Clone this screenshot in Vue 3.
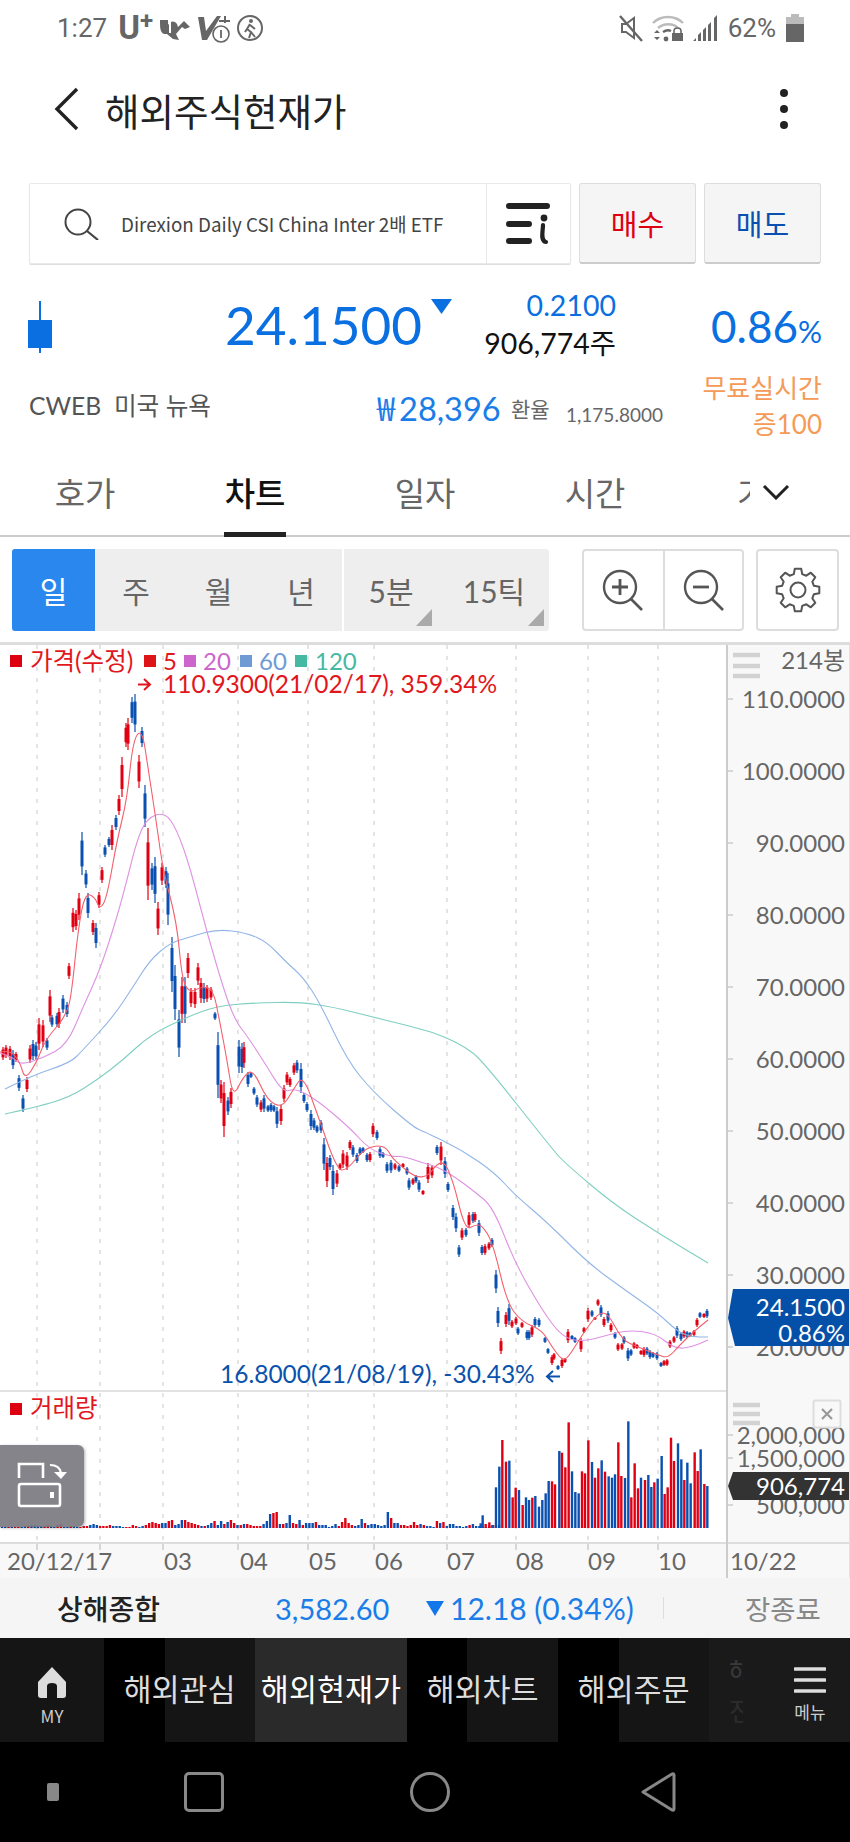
<template>
  <div class="page">
    <div class="status">
      <div class="status-left">
        <span class="time">1:27</span>
        <span class="carrier">U<sup>+</sup></span>
        <svg width="34" height="28" viewBox="0 0 34 28"><path d="M2 6h8v5c3-5 7-4 9-1l1 3 6-6 6 6-5 2-3-2-6 7 3 6-6-1-6-5H6c-4-2-4-6-4-14z" fill="#666"/><path d="M12 5v14" stroke="#fff" stroke-width="2"/></svg>
        <svg width="34" height="30" viewBox="0 0 34 30"><path d="M1 4h6l2 14L20 3h4L10 27H5z" fill="#666"/><path d="M22 8h11M28 3v7" stroke="#666" stroke-width="2"/><circle cx="24" cy="21" r="8" fill="#fff" stroke="#666" stroke-width="1.6"/><path d="M24 17v8" stroke="#666" stroke-width="1.8"/></svg>
        <svg width="28" height="28" viewBox="0 0 28 28"><circle cx="14" cy="14" r="12" fill="none" stroke="#666" stroke-width="2"/><circle cx="15" cy="7" r="2" fill="#666"/><path d="M14 10l-3 5 4 3-2 6M14 11l5 4M11 15l-2 3M15 18l4 5" fill="none" stroke="#666" stroke-width="2"/></svg>
      </div>
      <div class="status-right">
        <svg width="26" height="28" viewBox="0 0 26 28"><path d="M4 10h4l8-6v20l-8-6H4z" fill="none" stroke="#666" stroke-width="2"/><path d="M2 2l22 25" stroke="#666" stroke-width="2.4"/></svg>
        <svg width="32" height="28" viewBox="0 0 32 28"><path d="M1 9c8-8 22-8 30 0M6 14c6-5 15-5 20 0" fill="none" stroke="#bbb" stroke-width="2.4"/><path d="M11 18c3-2 6-2 8-1" fill="none" stroke="#666" stroke-width="2.4"/><circle cx="14" cy="25" r="2.4" fill="#666"/><path d="M2 19l3-3 3 3zM2 23l3 3 3-3z" fill="#666"/><rect x="20" y="19" width="11" height="8" fill="#666"/><path d="M22 19v-2c0-4 7-4 7 0v2" fill="none" stroke="#666" stroke-width="1.6"/></svg>
        <svg width="28" height="28" viewBox="0 0 28 28"><path d="M1 27l3-3v3zM6 27v-6l3-3v9zM11 27V16l3-3v14zM16 27V11l3-3v19zM22 27V4l3-3v26z" fill="#666"/></svg>
        <span class="pct">62%</span>
        <svg class="batt" width="18" height="28" viewBox="0 0 18 28"><path d="M5 0h8v3h5v7H0V3h5z" fill="#bbb"/><rect y="10" width="18" height="18" fill="#666"/></svg>
      </div>
    </div>

    <header class="head">
      <svg class="back" width="26" height="44" viewBox="0 0 26 44"><path d="M23 2L3 22l20 20" fill="none" stroke="#222" stroke-width="3.4"/></svg>
      <h1 class="title">해외주식현재가</h1>
      <div class="kebab"><i></i><i></i><i></i></div>
    </header>

    <div class="search-row">
      <div class="search">
        <svg class="glass" width="38" height="32" viewBox="0 0 38 32"><circle cx="15" cy="14" r="12.5" fill="none" stroke="#444" stroke-width="2"/><path d="M24 23l11 9" stroke="#444" stroke-width="2.2"/></svg>
        <span class="search-text">Direxion Daily CSI China Inter 2배 ETF</span>
        <div class="info-btn">
          <svg width="46" height="42" viewBox="0 0 46 42"><path d="M3 3h38M3 21h20M3 38h20" stroke="#222" stroke-width="6" stroke-linecap="round"/><circle cx="38" cy="15" r="3.4" fill="#222"/><path d="M37 22c0 6-3 16 3 17" fill="none" stroke="#222" stroke-width="4.2" stroke-linecap="round"/></svg>
        </div>
      </div>
      <button class="trade buy">매수</button>
      <button class="trade sell">매도</button>
    </div>

    <section class="quote">
      <svg class="candle" width="24" height="52" viewBox="0 0 24 52"><path d="M12 0v52" stroke="#0a6fe0" stroke-width="2"/><rect y="19" width="24" height="28" fill="#0a6fe0"/></svg>
      <div class="price">24.1500</div>
      <svg class="down" width="21" height="15" viewBox="0 0 21 15"><path d="M0 0h21L10.500 15z" fill="#0a6fe0"/></svg>
      <div class="change">
        <div class="change-val">0.2100</div>
        <div class="vol">906,774주</div>
      </div>
      <div class="rate">0.86<small>%</small></div>
    </section>

    <section class="sub">
      <div class="code">CWEB&nbsp; 미국 뉴욕</div>
      <div class="won"><span class="won-sign">₩</span>28,396</div>
      <div class="fx-label">환율</div>
      <div class="fx">1,175.8000</div>
      <div class="free">무료실시간<br>증100</div>
    </section>

    <nav class="tabs">
      <div class="tab">호가</div>
      <div class="tab on">차트</div>
      <div class="tab">일자</div>
      <div class="tab">시간</div>
      <div class="tab more">
        <span class="cut">기</span>
        <svg width="28" height="16" viewBox="0 0 28 16"><path d="M2 2l12 12L26 2" fill="none" stroke="#222" stroke-width="3"/></svg>
      </div>
    </nav>

    <div class="tools">
      <div class="seg">
        <div class="seg-item active">일</div>
        <div class="seg-item">주</div>
        <div class="seg-item">월</div>
        <div class="seg-item">년</div>
        <div class="seg-item corner min">5분</div>
        <div class="seg-item corner tick">15틱</div>
      </div>
      <div class="zoom-box">
        <div class="zoom-btn">
          <svg width="42" height="42" viewBox="0 0 42 42"><circle cx="18" cy="18" r="16" fill="none" stroke="#555" stroke-width="2.4"/><path d="M10 18h16M18 10v16" stroke="#555" stroke-width="2.8"/><path d="M29 30l11 11" stroke="#555" stroke-width="2.6"/></svg>
        </div>
        <div class="zoom-btn">
          <svg width="42" height="42" viewBox="0 0 42 42"><circle cx="18" cy="18" r="16" fill="none" stroke="#555" stroke-width="2.4"/><path d="M10 18h16" stroke="#555" stroke-width="2.8"/><path d="M29 30l11 11" stroke="#555" stroke-width="2.6"/></svg>
        </div>
      </div>
      <div class="gear-btn">
        <svg width="46" height="46" viewBox="0 0 46 46"><path :d="gearPath" fill="none" stroke="#555" stroke-width="2" stroke-linejoin="round"/><circle cx="23" cy="23" r="7.500" fill="none" stroke="#555" stroke-width="2"/></svg>
      </div>
    </div>

    <div class="chart">
      <svg class="plot" width="850" height="936" viewBox="0 642 850 936">
        <rect x="0" y="642" width="850" height="3" fill="#ddd"/>
        <rect x="727" y="645" width="123" height="933" fill="#f8f8f8"/>
        <rect x="0" y="1543" width="850" height="35" fill="#f8f8f8"/>

        <path v-for="x in gridX" :key="x" :d="`M${x} 645V1543`" stroke="#e4e4e4" stroke-width="2" stroke-dasharray="4 7"/>
        <path v-for="x in gridX" :key="'t' + x" :d="`M${x} 1543v7`" stroke="#ccc" stroke-width="1.5"/>

        <rect x="0" y="1390" width="727" height="2" fill="#e2e2e2"/>
        <rect x="0" y="1542" width="850" height="2" fill="#ddd"/>
        <rect x="726" y="645" width="2" height="933" fill="#ccc"/>
        <rect x="849" y="645" width="1" height="933" fill="#e2e2e2"/>

        <!-- candles -->
        <g v-for="(c, i) in candles" :key="i" :fill="c[3] ? red : blue">
          <rect :x="c[0] - 0.6" :y="c[1]" width="1.2" :height="c[2] - c[1]"/>
          <rect :x="c[0] - 1.500" :y="c[1] + (c[2] - c[1]) * 0.2" width="3" :height="(c[2] - c[1]) * 0.6"/>
        </g>

        <path :d="smooth(ma120)" class="ma" stroke="#7fcfc0"/>
        <path :d="smooth(ma60)" class="ma" stroke="#92b6e6"/>
        <path :d="smooth(ma20)" class="ma" stroke="#de92e2"/>
        <path :d="smooth(ma5)" class="ma" stroke="#f2606c"/>

        <!-- volume -->
        <rect v-for="(v, i) in earlyVol" :key="'e' + i" :x="2 + i * 3.27 - 1.2" :y="1528 - Math.abs(v)" width="2.4" :height="Math.abs(v)" :fill="v < 0 ? red : blue"/>
        <rect v-for="(v, i) in lateVol" :key="'l' + i" :x="480 + v[0] / 3 - 1.2" :y="1410 + v[1] / 3" width="2.4" :height="1528 - 1410 - v[1] / 3" :fill="v[2] ? red : blue"/>

        <!-- legends -->
        <rect x="10" y="655" width="12" height="12" fill="#dd0010"/>
        <text x="30" y="670" class="t25" fill="#e2171d">가격(수정)</text>
        <rect x="144" y="655" width="12" height="12" fill="#dd1418"/>
        <text x="163" y="670" class="t24" fill="#e2171d">5</text>
        <rect x="184" y="655" width="12" height="12" fill="#cc66cc"/>
        <text x="203" y="670" class="t24" fill="#cc66cc">20</text>
        <rect x="240" y="655" width="12" height="12" fill="#6e9bd4"/>
        <text x="259" y="670" class="t24" fill="#6e9bd4">60</text>
        <rect x="295" y="655" width="12" height="12" fill="#45b9a2"/>
        <text x="315" y="670" class="t24" fill="#45b9a2">120</text>

        <path d="M138 684.500h11M144 679l6 5.500-6 5.500" fill="none" stroke="#e2171d" stroke-width="2"/>
        <text x="163" y="693" class="t25" fill="#e2171d">110.9300(21/02/17), 359.34%</text>

        <text x="220" y="1383" class="t25" fill="#0b52ad">16.8000(21/08/19), -30.43%</text>
        <path d="M560 1376.500h-12M553 1371l-6 5.500 6 5.500" fill="none" stroke="#0b52ad" stroke-width="2"/>

        <rect x="10" y="1403" width="12" height="12" fill="#dd0010"/>
        <text x="30" y="1417" class="t25" fill="#e2171d">거래량</text>

        <!-- price axis -->
        <path d="M733 655h27M733 666h27M733 676h27M733 1405h27M733 1414h27M733 1423h27" stroke="#d2d2d2" stroke-width="4.500"/>
        <text x="845" y="669" class="axis t24">214봉</text>
        <g v-for="p in priceAxis" :key="p.label">
          <path :d="`M727 ${p.y}h6`" stroke="#ccc" stroke-width="1.500"/>
          <text x="845" :y="p.y + 9" class="axis t24">{{ p.label }}</text>
        </g>
        <path d="M733 1289H849V1346H735L728 1318z" fill="#0450a8"/>
        <text x="845" y="1316" class="t24 tag">24.1500</text>
        <text x="845" y="1342" class="t24 tag">0.86%</text>

        <!-- volume axis -->
        <g v-for="p in volAxis" :key="p.label">
          <path :d="`M727 ${p.y}h6`" stroke="#ccc" stroke-width="1.500"/>
          <text x="845" :y="p.y + 9" class="axis t24">{{ p.label }}</text>
        </g>
        <path d="M733 1472H849V1500H733L728 1486z" fill="#333"/>
        <text x="845" y="1495" class="t24 tag">906,774</text>
        <rect x="813.500" y="1400.500" width="27" height="27" rx="2" fill="#f8f8f8" stroke="#ddd" stroke-width="2"/>
        <path d="M822 1409l10 10M832 1409l-10 10" stroke="#999" stroke-width="2.200"/>

        <!-- date axis -->
        <text v-for="d in dates" :key="d.t" :x="d.x" y="1570" class="axis t24 date">{{ d.t }}</text>
      </svg>

      <div class="rotate">
        <svg width="50" height="48" viewBox="0 0 50 48"><path d="M2 16V2h24v14" fill="none" stroke="#fff" stroke-width="2.600"/><rect x="2" y="22" width="41" height="22" rx="2" fill="none" stroke="#fff" stroke-width="2.600"/><rect x="33" y="30" width="4" height="6" fill="#fff"/><path d="M33 3c6 0 10 2 11 8" fill="none" stroke="#fff" stroke-width="2.200"/><path d="M37 10h13l-6 7z" fill="#fff"/></svg>
      </div>
    </div>

    <div class="ticker">
      <span class="idx">상해종합</span>
      <span class="idx-val">3,582.60</span>
      <svg class="idx-tri" width="18" height="15" viewBox="0 0 18 15"><path d="M0 0h18L9 15z" fill="#1277e8"/></svg>
      <span class="idx-chg">12.18 (0.34%)</span>
      <i class="idx-sep"></i>
      <span class="idx-state">장종료</span>
    </div>

    <nav class="bottom">
      <div class="icon-item my">
        <svg width="32" height="32" viewBox="0 0 32 32"><path d="M16 1l14 15v13c0 2-1 3-3 3h-6V20c0-2-2-3-5-3s-5 1-5 3v12H5c-2 0-3-1-3-3V16z" fill="#ddd"/></svg>
        <span>MY</span>
      </div>
      <div class="nav-item">해외관심</div>
      <div class="nav-item active">해외현재가</div>
      <div class="nav-item">해외차트</div>
      <div class="nav-item">해외주문</div>
      <div class="ghost"><span>해</span><span>전</span></div>
      <div class="icon-item menu">
        <svg width="32" height="28" viewBox="0 0 32 28"><path d="M1 3h30M1 14h30M1 25h30" stroke="#ddd" stroke-width="3.600" stroke-linecap="round"/></svg>
        <span>메뉴</span>
      </div>
    </nav>

    <div class="android">
      <i class="dot"></i>
      <i class="recent"></i>
      <i class="home"></i>
      <svg width="36" height="42" viewBox="0 0 36 42"><path d="M32 3L3 21l29 18c1 .5 2 0 2-1V4c0-1-1-1.500-2-1z" fill="none" stroke="#888" stroke-width="3" stroke-linejoin="round"/></svg>
    </div>
  </div>
</template>

<script setup>
const red = '#e00012'
const blue = '#0a50b0'

const gridX = [37, 100, 163, 238, 308, 374, 447, 516, 588, 658]

const priceAxis = [110, 100, 90, 80, 70, 60, 50, 40, 30, 20].map((p) => ({
  label: p.toFixed(4),
  y: 1347 - (p - 20) * 7.2,
}))

const volAxis = [
  { label: '2,000,000', y: 1435 },
  { label: '1,500,000', y: 1458 },
  { label: '500,000', y: 1505 },
]

const dates = [
  { t: '20/12/17', x: 7 },
  { t: '03', x: 164 },
  { t: '04', x: 240 },
  { t: '05', x: 309 },
  { t: '06', x: 375 },
  { t: '07', x: 447 },
  { t: '08', x: 516 },
  { t: '09', x: 588 },
  { t: '10', x: 658 },
  { t: '10/22', x: 730 },
]

// eight teeth around the middle of a 46 box
const gearPath = (() => {
  let d = ''
  for (let i = 0; i < 8; i++) {
    const a = (i * Math.PI) / 4
    const pts = [[-0.26, 16.5], [-0.15, 21.5], [0.15, 21.5], [0.26, 16.5]]
    pts.forEach(([da, r], k) => {
      const x = (23 + r * Math.sin(a + da)).toFixed(1)
      const y = (23 - r * Math.cos(a + da)).toFixed(1)
      d += `${i === 0 && k === 0 ? 'M' : 'L'}${x} ${y}`
    })
  }
  return d + 'z'
})()

// [x, top, bottom, isRed]
const candles = [
  [3,1047,1060,1],[6,1045,1058,1],[10,1046,1060,1],[13,1050,1069,0],[16,1052,1062,1],[19,1075,1091,0],[23,1095,1112,0],[27,1077,1092,1],
  [30,1045,1063,1],[33,1040,1060,0],[36,1042,1060,0],[39,1018,1050,1],[43,1020,1047,1],[47,1038,1050,0],[50,990,1022,1],[52,1015,1027,0],
  [57,1013,1027,0],[59,1008,1028,1],[63,995,1013,0],[67,1002,1017,0],[69,963,979,1],[73,908,932,1],[76,910,930,1],[79,893,920,1],
  [82,832,875,0],[86,870,888,0],[88,893,918,0],[93,920,935,1],[96,923,948,0],[99,892,908,1],[102,867,883,1],[105,845,857,0],
  [109,837,847,0],[112,825,850,1],[116,815,830,0],[119,795,815,1],[122,757,797,1],[126,723,747,1],[128,718,750,1],[132,697,723,0],
  [135,694,732,0],[139,755,788,1],[142,727,747,0],[145,785,827,0],[148,828,900,1],[152,863,890,0],[155,857,903,0],[158,902,935,1],
  [162,863,885,1],[166,867,888,0],[168,873,925,0],[172,937,992,0],[175,965,1020,0],[179,1010,1057,0],[182,977,1023,1],[185,977,1023,0],
  [188,953,978,1],[191,988,1007,1],[195,988,1008,1],[198,963,985,1],[201,978,1003,1],[204,983,1003,0],[207,985,1002,1],[211,987,1000,1],
  [215,1012,1020,0],[218,1032,1098,0],[221,1080,1103,1],[224,1082,1137,1],[228,1097,1115,0],[231,1088,1108,1],[239,1040,1073,0],[242,1043,1073,0],
  [244,1042,1068,1],[248,1072,1087,0],[251,1072,1078,0],[254,1087,1095,0],[257,1095,1107,0],[261,1100,1112,1],[264,1095,1112,0],[268,1105,1112,0],
  [271,1103,1112,0],[274,1105,1112,0],[277,1107,1128,0],[281,1105,1125,1],[284,1085,1102,1],[287,1072,1085,1],[290,1077,1087,1],[294,1063,1075,1],
  [297,1060,1073,0],[301,1063,1093,0],[304,1093,1103,0],[307,1102,1112,0],[311,1110,1130,0],[314,1118,1130,0],[317,1125,1133,0],[321,1120,1133,0],
  [324,1138,1170,0],[327,1157,1187,1],[330,1155,1170,0],[333,1165,1195,0],[337,1170,1187,1],[340,1163,1170,1],[343,1150,1168,1],[347,1152,1170,1],
  [350,1140,1150,1],[353,1145,1157,0],[357,1153,1163,0],[360,1147,1155,0],[363,1147,1153,0],[367,1153,1162,0],[370,1152,1162,1],[373,1123,1137,1],
  [377,1130,1140,0],[380,1147,1158,0],[383,1152,1158,0],[387,1162,1173,0],[391,1160,1173,0],[395,1163,1170,1],[399,1165,1172,0],[403,1163,1168,1],
  [407,1167,1175,0],[409,1178,1190,0],[413,1178,1185,1],[416,1175,1183,0],[419,1180,1192,0],[423,1190,1195,1],[428,1163,1183,1],[432,1165,1178,1],
  [437,1145,1155,0],[441,1142,1165,1],[445,1157,1178,0],[448,1182,1192,0],[453,1205,1220,0],[456,1213,1232,0],[459,1245,1257,0],[462,1228,1240,1],
  [466,1228,1237,0],[469,1212,1228,1],[473,1212,1223,0],[475,1212,1222,1],[479,1220,1236,0],[482,1245,1255,0],[485,1244,1255,1],[489,1242,1250,1],
  [492,1238,1247,0],[496,1270,1293,0],[498,1307,1327,0],[501,1338,1354,1],[506,1312,1327,1],[509,1304,1325,0],[512,1320,1328,1],[516,1317,1325,1],
  [518,1327,1335,0],[522,1322,1328,1],[527,1330,1340,0],[529,1330,1340,0],[532,1325,1337,1],[535,1317,1327,0],[539,1318,1327,0],[545,1337,1343,0],
  [548,1348,1354,0],[552,1355,1365,1],[554,1353,1360,1],[558,1365,1370,0],[562,1358,1368,1],[565,1358,1363,1],[568,1329,1343,1],[572,1335,1340,0],
  [575,1337,1343,0],[581,1338,1352,1],[584,1327,1333,1],[588,1308,1322,1],[592,1310,1317,0],[595,1317,1320,1],[598,1299,1306,1],[601,1305,1317,0],
  [604,1317,1327,1],[608,1311,1323,0],[611,1323,1332,1],[615,1332,1339,0],[618,1343,1351,1],[622,1343,1350,1],[624,1336,1344,0],[628,1348,1361,0],
  [631,1349,1356,0],[634,1342,1349,1],[637,1344,1349,1],[641,1350,1355,1],[644,1347,1357,1],[647,1347,1355,0],[650,1350,1359,0],[653,1352,1358,0],
  [657,1352,1360,0],[661,1362,1367,0],[664,1360,1366,1],[667,1359,1366,1],[670,1340,1348,1],[674,1336,1343,1],[677,1326,1338,0],[681,1332,1341,0],
  [684,1330,1338,1],[687,1331,1338,0],[690,1332,1337,0],[694,1330,1336,1],[697,1318,1327,1],[700,1312,1318,0],[704,1313,1318,1],[707,1309,1318,0],
]

const ma5 = [[0,1052],[10,1050],[20,1062],[25,1080],[37,1062],[45,1040],[67,1015],[72,990],[78,930],[85,893],[95,897],[100,910],[107,897],[117,840],[127,800],[133,740],[142,729],[148,767],[157,827],[163,870],[177,923],[182,980],[190,993],[200,987],[213,988],[220,1023],[227,1060],[233,1098],[243,1077],[253,1069],[267,1100],[282,1108],[293,1090],[303,1075],[317,1113],[337,1170],[347,1170],[363,1150],[377,1145],[387,1148],[393,1160],[423,1183],[442,1157],[453,1180],[465,1230],[475,1225],[482,1225],[493,1243],[507,1303],[522,1322],[542,1330],[552,1347],[562,1360],[568,1358],[582,1335],[598,1313],[608,1313],[622,1340],[638,1347],[658,1355],[668,1358],[678,1347],[692,1333],[708,1320]]
const ma20 = [[0,1053],[13,1057],[20,1065],[43,1058],[67,1045],[83,1007],[100,970],[117,917],[127,880],[137,840],[147,818],[165,812],[177,830],[190,867],[207,933],[227,1000],[237,1023],[245,1033],[263,1060],[283,1093],[295,1088],[317,1100],[350,1128],[370,1150],[393,1157],[403,1156],[423,1163],[438,1167],[455,1177],[475,1192],[493,1207],[515,1263],[542,1310],[562,1337],[582,1342],[608,1335],[628,1330],[655,1333],[675,1349],[692,1347],[708,1340]]
const ma60 = [[5,1089],[33,1075],[70,1063],[83,1050],[113,1017],[133,987],[150,960],[170,943],[190,937],[217,929],[247,933],[267,942],[287,963],[303,977],[320,1003],[347,1060],[373,1092],[413,1127],[425,1132],[462,1150],[495,1173],[515,1195],[548,1223],[588,1263],[625,1290],[658,1313],[678,1332],[692,1337],[708,1337]]
const ma120 = [[5,1114],[37,1107],[70,1097],[97,1080],[123,1060],[150,1035],[187,1017],[217,1006],[253,1003],[300,1002],[333,1007],[373,1017],[425,1030],[445,1037],[465,1047],[482,1060],[553,1150],[565,1163],[612,1203],[658,1233],[708,1263]]

// midpoints + quadratic curves so the averages don't look like polylines
const smooth = (pts) => {
  let d = `M${pts[0][0]} ${pts[0][1]}`
  for (let i = 1; i < pts.length - 1; i++) {
    const mx = (pts[i][0] + pts[i + 1][0]) / 2
    const my = (pts[i][1] + pts[i + 1][1]) / 2
    d += `Q${pts[i][0]} ${pts[i][1]} ${mx} ${my}`
  }
  const last = pts[pts.length - 1]
  return d + `L${last[0]} ${last[1]}`
}

// negative = red bar
const earlyVol = [
  1,1,-1,1,-1,-1,1,2,-2,3,3,2,2,-2,-3,2,1,-3,-4,1,1,-2,2,1,-1,-2,-2,3,4,3,
  -2,-2,-2,-3,2,2,2,1,-1,-1,-3,-2,1,2,-3,-5,-6,-5,-4,5,5,-7,-8,3,4,8,-8,-6,-5,-4,
  -3,2,-2,3,5,-7,3,7,-4,6,-8,-5,3,-3,4,-4,-3,-2,-2,-2,4,7,14,-15,-16,4,-4,5,13,-5,
  -4,8,-3,5,5,5,-6,3,3,3,1,2,4,-2,-6,-10,-5,-3,2,3,9,-5,3,4,4,3,2,3,16,
  -10,5,5,-3,-3,-2,-3,-6,-3,4,-3,2,2,1,-7,5,-6,2,4,4,2,2,1,2,-3,4,2,2,1,1,-2,3,-3,3,
]

// [zoomed x, zoomed top, isRed], read off the busy stretch after July
const lateVol = [
  [2,340,0],[8,316,0],[17,342,1],[28,337,1],[38,345,0],[48,232,0],[58,170,0],[67,90,1],[78,155,1],[88,152,0],[98,262,1],[107,233,1],[117,240,0],[128,285,1],[138,262,0],[147,270,0],[157,263,1],[166,258,0],[177,290,0],[187,270,0],[197,250,0],[206,213,0],[216,214,1],[225,223,1],[238,123,0],[246,128,1],[256,172,1],[266,37,1],[276,184,0],[286,246,0],[296,250,0],[306,184,1],[315,190,1],[325,91,1],[336,156,0],[345,203,1],[355,175,1],[365,151,0],[375,185,1],[386,199,0],[396,203,0],[405,193,0],[415,97,1],[424,198,1],[435,204,0],[445,34,0],[454,262,1],[464,160,1],[474,235,1],[483,203,0],[495,210,1],[505,195,0],[514,231,0],[523,217,1],[533,206,0],[545,138,0],[554,252,1],[563,232,1],[573,83,1],[582,153,1],[594,100,0],[604,148,0],[613,210,1],[622,158,0],[632,220,0],[644,127,1],[653,183,1],[662,118,0],[673,222,1],[682,228,0],
]
</script>

<style>
html, body {
  margin: 0;
  background: #fff;
}
</style>

<style scoped>
.page {
  width: 850px;
  height: 1842px;
  overflow: hidden;
  background: #fff;
  font-family: Lato, "Noto Sans CJK KR", sans-serif;
  color: #222;
}

/* status bar */
.status {
  height: 55px;
  padding: 0 46px 0 57px;
  display: flex;
  align-items: center;
  justify-content: space-between;
  color: #666;
  box-sizing: border-box;
}
.status-left, .status-right {
  display: flex;
  align-items: center;
}
.status-left { gap: 5px; }
.status-right { gap: 8px; }
.time {
  font: 26px Roboto, sans-serif;
  margin-right: 6px;
}
.carrier {
  font: 700 33px Roboto, sans-serif;
  line-height: 30px;
}
.carrier sup {
  font-size: 24px;
  line-height: 0;
  vertical-align: 10px;
}
.pct { font: 26px Roboto, sans-serif; }
.batt { margin-left: 2px; }

/* title */
.head {
  height: 108px;
  padding: 0 62px 0 54px;
  display: flex;
  align-items: center;
}
.title {
  margin: 0 0 0 25px;
  font: 400 37.5px "Noto Sans CJK KR", sans-serif;
  color: #222;
  flex: 1;
}
.kebab {
  display: flex;
  flex-direction: column;
  gap: 8px;
}
.kebab i {
  width: 8px;
  height: 8px;
  border-radius: 50%;
  background: #222;
}

/* search */
.search-row {
  margin-top: 20px;
  padding: 0 29px;
  height: 81px;
  display: flex;
  gap: 8px;
}
.search {
  width: 542px;
  display: flex;
  align-items: center;
  border: 1px solid #e8e8e8;
  box-sizing: border-box;
  border-radius: 2px;
  box-shadow: 0 1px 1px #ddd;
}
.glass { margin-left: 33px; }
.search-text {
  margin-left: 20px;
  font: 18.8px "Noto Sans CJK KR", sans-serif;
  color: #444;
  flex: 1;
  white-space: nowrap;
}
.info-btn {
  width: 83px;
  height: 100%;
  border-left: 1px solid #e8e8e8;
  display: flex;
  align-items: center;
  justify-content: center;
}
.trade {
  width: 117px;
  height: 81px;
  padding: 0;
  background: #f5f5f5;
  border: 1px solid #ddd;
  border-bottom: 2px solid #ccc;
  border-radius: 3px;
  font: 400 29px "Noto Sans CJK KR", sans-serif;
}
.trade.buy { color: #dd0010; }
.trade.sell { color: #0a50b0; }

/* quote */
.quote {
  height: 106px;
  padding: 0 28px;
  display: flex;
  align-items: flex-start;
  position: relative;
}
.candle { margin-top: 37px; }
.price {
  width: 370px;
  margin-top: 28px;
  text-align: right;
  font-size: 53px;
  line-height: 66px;
  color: #0a6fe0;
}
.down { margin: 35px 0 0 9px; }
.change {
  width: 164px;
  text-align: right;
  margin-top: 22px;
  font-size: 28.5px;
  line-height: 38px;
}
.change-val { color: #0a6fe0; }
.vol { color: #111; }
.rate {
  flex: 1;
  margin-top: 35px;
  text-align: right;
  font-size: 44px;
  line-height: 54px;
  color: #0a6fe0;
}
.rate small { font-size: 30px; }

.sub {
  height: 80px;
  padding: 0 28px 0 29px;
  display: flex;
  align-items: flex-start;
}
.code {
  width: 346px;
  font: 24.7px Lato, "Noto Sans CJK KR", sans-serif;
  color: #555;
  margin-top: 16px;
  white-space: nowrap;
}
.won {
  width: 136px;
  margin-top: 16px;
  font-size: 32.5px;
  line-height: 42px;
  color: #1a7de8;
  white-space: nowrap;
}
.won-sign {
  margin-left: 2px;
  letter-spacing: 4px;
  font-family: "Noto Sans CJK KR", sans-serif;
}
.fx-label {
  width: 55px;
  margin-top: 23px;
  font: 21px "Noto Sans CJK KR", sans-serif;
  color: #666;
}
.fx {
  margin-top: 33px;
  font-size: 19px;
  line-height: 24px;
  color: #666;
}
.free {
  flex: 1;
  margin-top: 0;
  text-align: right;
  font: 26px/36px Lato, "Noto Sans CJK KR", sans-serif;
  color: #f59a57;
}

/* tabs */
.tabs {
  height: 87px;
  display: grid;
  grid-template-columns: repeat(5, 170px);
  border-bottom: 2px solid #ccc;
  box-sizing: border-box;
}
.tab {
  display: flex;
  justify-content: center;
  align-items: center;
  padding-bottom: 2px;
  font: 33px "Noto Sans CJK KR", sans-serif;
  color: #666;
}
.tab.on {
  color: #111;
  font-weight: 500;
  position: relative;
}
.tab.on::after {
  content: "";
  position: absolute;
  left: 54px;
  width: 62px;
  bottom: -2px;
  height: 5px;
  background: #222;
}
.tab.more {
  justify-content: flex-start;
  padding-left: 57px;
  gap: 12px;
}
.cut {
  width: 13px;
  overflow: hidden;
}

/* toolbar */
.tools {
  height: 105px;
  padding: 12px 11px 0 12px;
  box-sizing: border-box;
  display: flex;
}
.seg {
  width: 538px;
  height: 82px;
  display: grid;
  grid-template-columns: 83px 82px 83px 82px 96px 112px;
  background: #eee;
  border-radius: 3px;
  font: 30px Lato, "Noto Sans CJK KR", sans-serif;
  color: #666;
  overflow: hidden;
}
.seg-item {
  display: flex;
  align-items: center;
  justify-content: center;
  position: relative;
}
.seg-item.active {
  background: #2a87ee;
  color: #fff;
}
.seg-item.min {
  border-left: 2px solid #fff;
}
.corner::after {
  content: "";
  position: absolute;
  right: 6px;
  bottom: 5px;
  border-style: solid;
  border-width: 0 0 17px 16px;
  border-color: transparent transparent #aaa transparent;
}
.zoom-box {
  margin-left: 33px;
  width: 163px;
  height: 82px;
  display: grid;
  grid-template-columns: 1fr 1fr;
  border: 2px solid #ddd;
  border-radius: 4px;
  box-sizing: border-box;
}
.zoom-btn {
  display: flex;
  align-items: center;
  justify-content: center;
}
.zoom-btn + .zoom-btn { border-left: 2px solid #ddd; }
.gear-btn {
  margin-left: 12px;
  width: 83px;
  height: 82px;
  border: 2px solid #ddd;
  border-radius: 4px;
  box-sizing: border-box;
  display: flex;
  align-items: center;
  justify-content: center;
}

/* chart */
.chart {
  height: 936px;
  position: relative;
}
.plot { display: block; }
.ma {
  fill: none;
  stroke-width: 1.1;
}
.t24 { font: 24px Lato, "Noto Sans CJK KR", sans-serif; }
.t25 { font: 24.5px Lato, "Noto Sans CJK KR", sans-serif; }
.axis {
  fill: #666;
  text-anchor: end;
}
.date { text-anchor: start; }
.tag {
  fill: #fff;
  text-anchor: end;
}
.rotate {
  position: absolute;
  left: 0;
  top: 803px;
  width: 84px;
  height: 82px;
  background: rgba(122, 122, 128, .92);
  border-radius: 0 6px 6px 0;
  box-shadow: 1px 1px 3px rgba(0, 0, 0, .3);
  display: flex;
  align-items: center;
  justify-content: center;
}

/* index ticker */
.ticker {
  height: 60px;
  background: #f5f5f5;
  display: flex;
  align-items: center;
  padding-left: 57px;
  white-space: nowrap;
  box-sizing: border-box;
}
.idx {
  width: 218px;
  font: 500 28px "Noto Sans CJK KR", sans-serif;
  color: #222;
}
.idx-val {
  width: 151px;
  font-size: 29px;
  color: #1a7de8;
}
.idx-tri { margin-right: 6px; }
.idx-chg {
  width: 213px;
  font-size: 30px;
  color: #1a7de8;
}
.idx-sep {
  width: 1px;
  height: 22px;
  background: #ddd;
}
.idx-state {
  margin-left: 81px;
  font: 27.5px "Noto Sans CJK KR", sans-serif;
  color: #888;
}

/* app nav */
.bottom {
  height: 104px;
  display: grid;
  grid-template-columns: 104px 151px 152px 151px 151px 61px 80px;
  background: linear-gradient(90deg, #151515 0 104px, #000 104px 165px, #151515 165px 255px, #000 255px 467px, #151515 467px 558px, #000 558px 619px, #151515 619px 709px, #1a1a1a 709px 850px);
}
.nav-item {
  display: flex;
  align-items: center;
  justify-content: center;
  font: 30.5px "Noto Sans CJK KR", sans-serif;
  color: #ddd;
  padding-bottom: 4px;
  white-space: nowrap;
}
.nav-item.active {
  background: #2a2a2a;
  color: #fff;
}
.icon-item {
  display: flex;
  flex-direction: column;
  align-items: center;
  justify-content: flex-start;
  padding-top: 28px;
  gap: 7px;
  font: 17px "Noto Sans CJK KR", sans-serif;
  color: #ccc;
  box-sizing: border-box;
}
.icon-item span { line-height: 22px; }
.ghost {
  width: 14px;
  margin-left: 20px;
  overflow: hidden;
  padding-top: 16px;
  box-sizing: border-box;
  display: flex;
  flex-direction: column;
  gap: 8px;
  font: 26px/32px "Noto Sans CJK KR", sans-serif;
  color: #3a3a3a;
}
.ghost span + span { color: #2c2c2c; }

/* system nav */
.android {
  height: 100px;
  background: #000;
  display: flex;
  align-items: center;
  padding-left: 47px;
}
.android i { display: block; }
.dot {
  width: 12px;
  height: 18px;
  border-radius: 2px;
  background: #888;
}
.recent {
  margin-left: 125px;
  width: 40px;
  height: 40px;
  box-sizing: border-box;
  border: 3px solid #888;
  border-radius: 5px;
}
.home {
  margin-left: 186px;
  width: 40px;
  height: 40px;
  box-sizing: border-box;
  border: 3px solid #888;
  border-radius: 50%;
}
.android svg { margin-left: 190px; }
</style>
